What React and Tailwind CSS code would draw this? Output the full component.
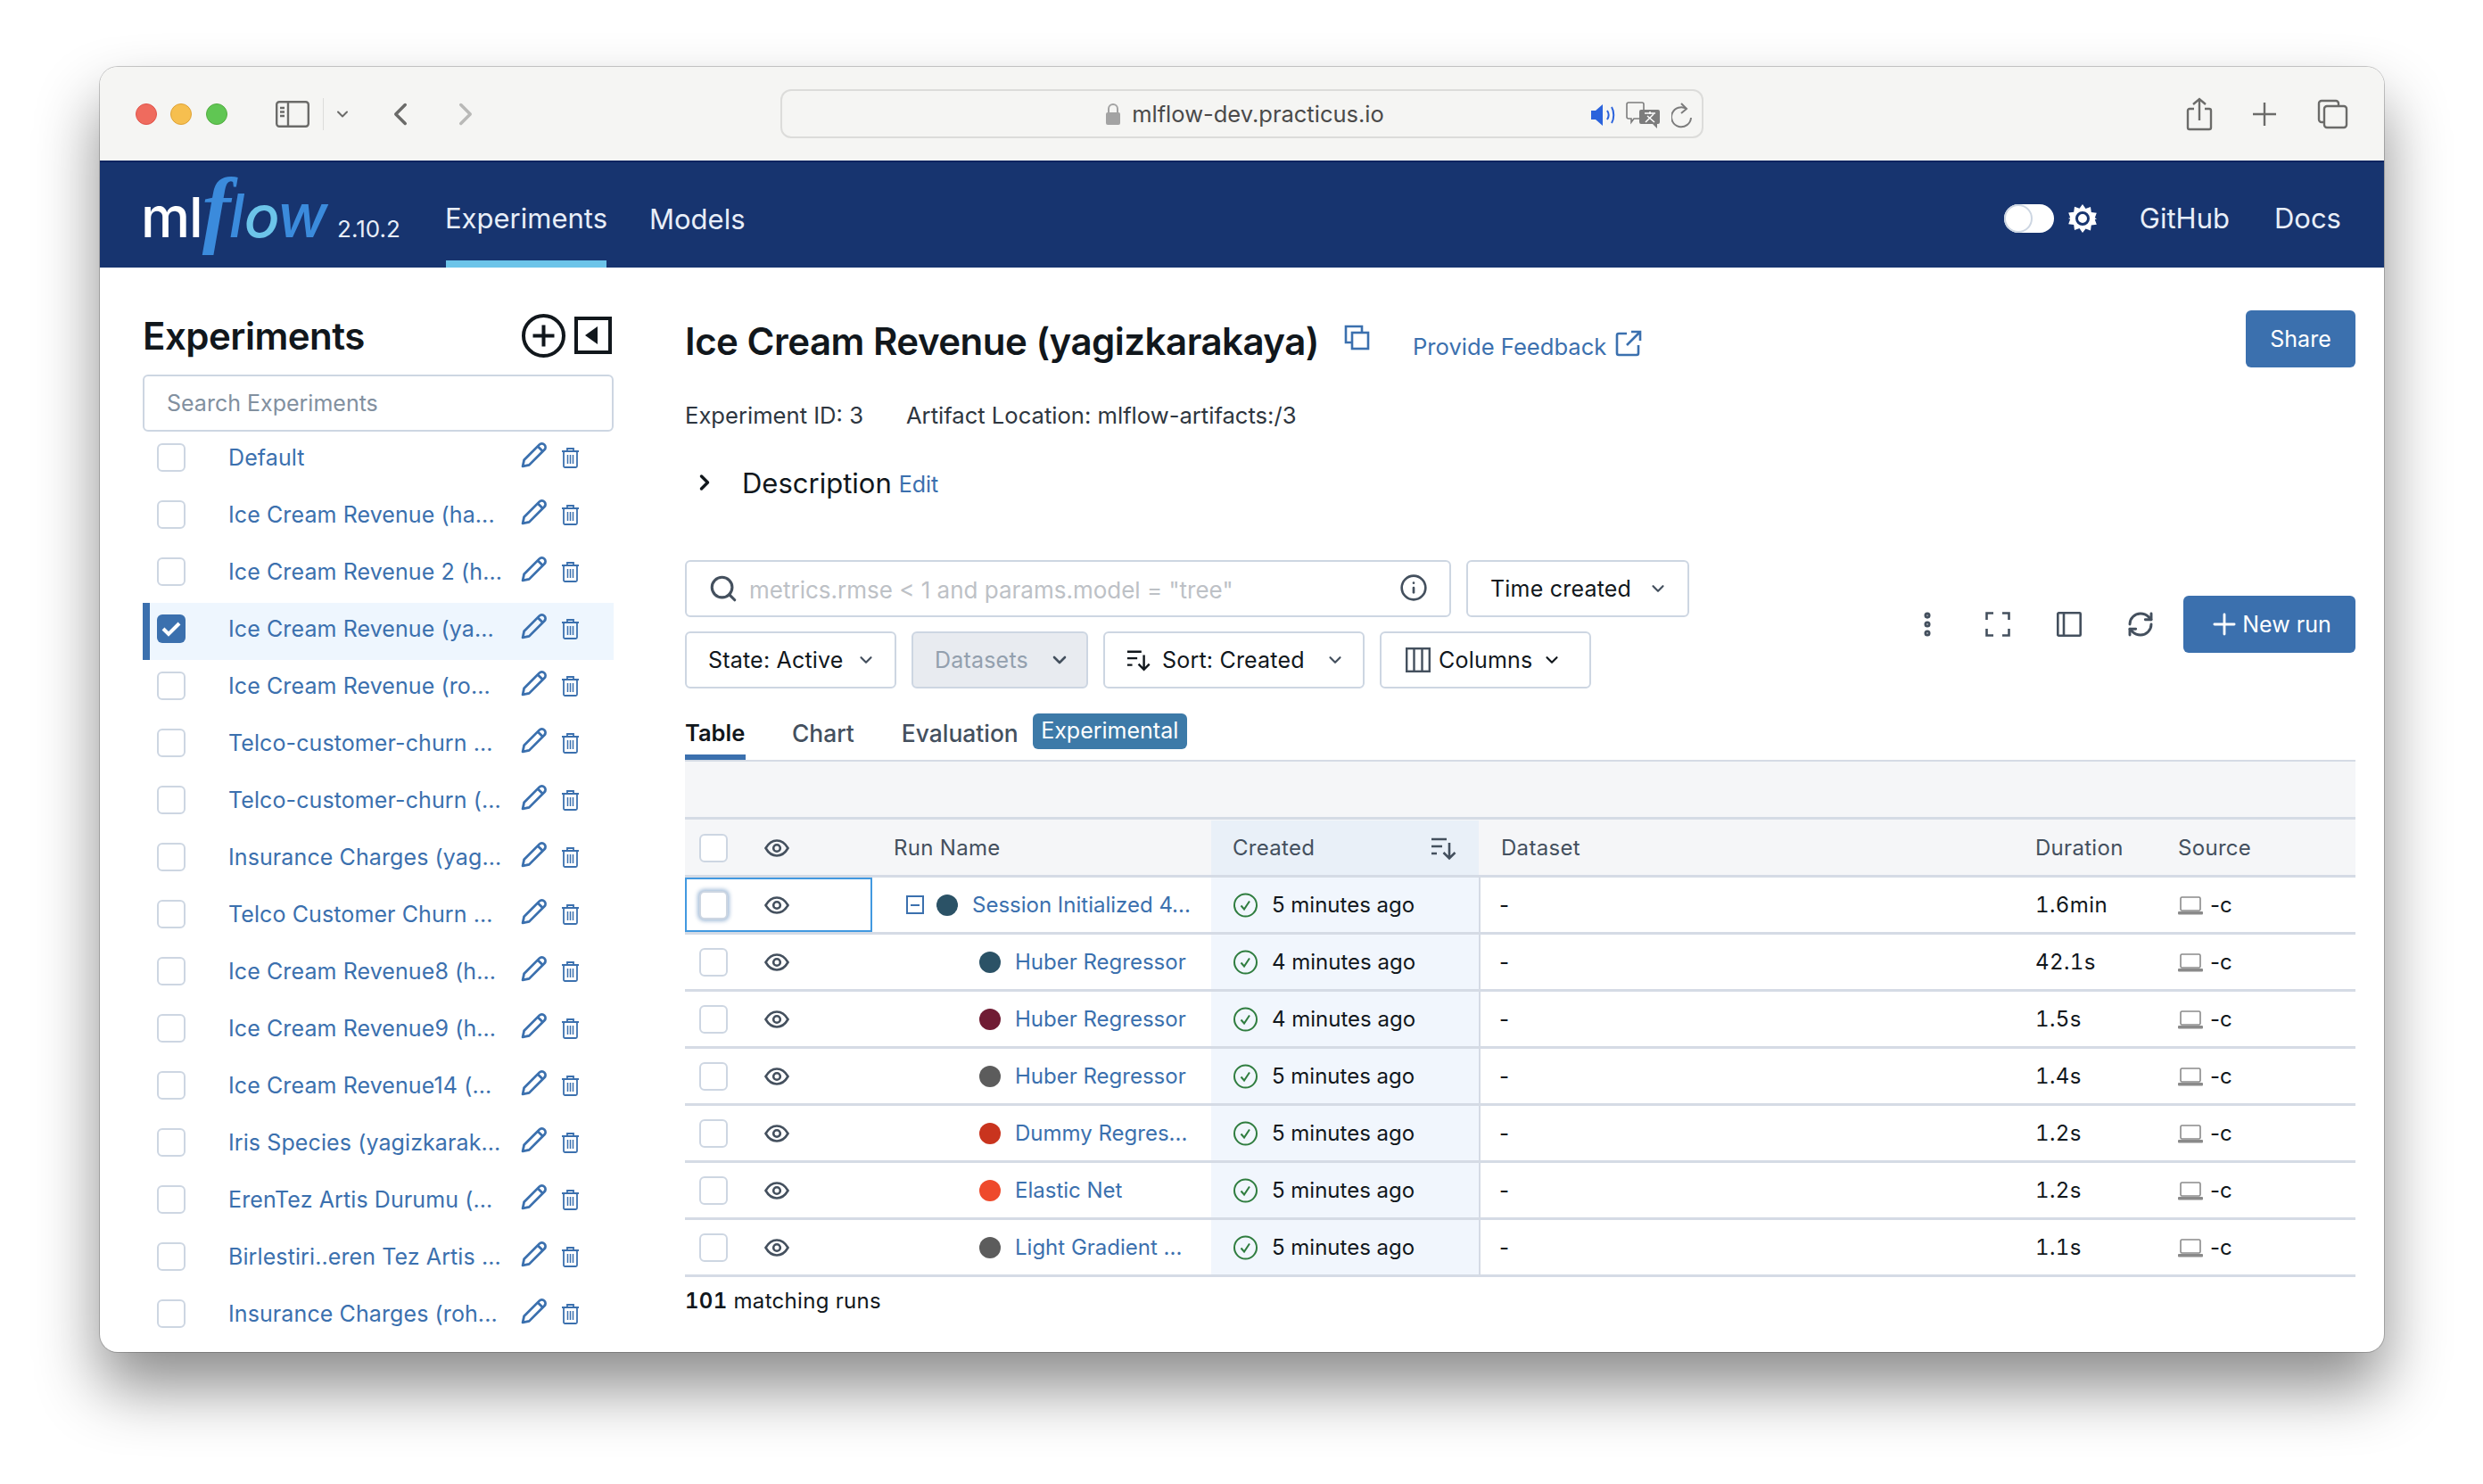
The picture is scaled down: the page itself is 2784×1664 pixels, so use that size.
import { ChevronDown, ChevronLeft, ChevronRight, Plus, Search, Info, EllipsisVertical, RefreshCw } from "lucide-react";

const experiments = [
    "Default",
    "Ice Cream Revenue (ha...",
    "Ice Cream Revenue 2 (h...",
    "Ice Cream Revenue (ya...",
    "Ice Cream Revenue (ro...",
    "Telco-customer-churn ...",
    "Telco-customer-churn (...",
    "Insurance Charges (yag...",
    "Telco Customer Churn ...",
    "Ice Cream Revenue8 (h...",
    "Ice Cream Revenue9 (h...",
    "Ice Cream Revenue14 (...",
    "Iris Species (yagizkarak...",
    "ErenTez Artis Durumu (...",
    "Birlestiri..eren Tez Artis ...",
    "Insurance Charges (roh...",
];

const runs = [
    { name: "Session Initialized 4...", dot: "bg-[#2b5266]", created: "5 minutes ago", duration: "1.6min", parent: true },
    { name: "Huber Regressor", dot: "bg-[#2b5266]", created: "4 minutes ago", duration: "42.1s" },
    { name: "Huber Regressor", dot: "bg-[#701c34]", created: "4 minutes ago", duration: "1.5s" },
    { name: "Huber Regressor", dot: "bg-[#5c5c5c]", created: "5 minutes ago", duration: "1.4s" },
    { name: "Dummy Regres...", dot: "bg-[#c9341e]", created: "5 minutes ago", duration: "1.2s" },
    { name: "Elastic Net", dot: "bg-[#ee4a2c]", created: "5 minutes ago", duration: "1.2s" },
    { name: "Light Gradient ...", dot: "bg-[#5c5c5c]", created: "5 minutes ago", duration: "1.1s" },
];

function PencilIcon() {
    return (
        <svg className="-mt-[6px]" width="30" height="30" viewBox="0 0 29 29" fill="none" stroke="#3b70ae" strokeWidth="2.7" strokeLinejoin="round">
            <path d="M2 27l1.5-7L20 3.5a3.2 3.2 0 0 1 5.5 5.5L9 25.5z" />
            <path d="M18.5 5.5l5 5" />
        </svg>
    );
}

function TrashIcon() {
    return (
        <svg width="21" height="24" viewBox="0 0 21 24" fill="none" stroke="#3b70ae" strokeWidth="1.8">
            <path d="M1 5h19M7 5V2h7v3" />
            <rect x="3" y="5" width="15" height="18" rx="1.5" />
            <path d="M7.5 9v10M10.5 9v10M13.5 9v10" strokeWidth="1.5" />
        </svg>
    );
}

function EyeIcon() {
    return (
        <svg width="28" height="20" viewBox="0 0 28 20" fill="none" stroke="#44505e" strokeWidth="2.6">
            <path d="M1.5 10C5 4 9 1.5 14 1.5S23 4 26.5 10C23 16 19 18.5 14 18.5S5 16 1.5 10z" />
            <circle cx="14" cy="10" r="3.8" />
        </svg>
    );
}

function SortIcon({ color = "#11171c", w = 30 }) {
    return (
        <svg width={w} height="28" viewBox="0 0 30 28" fill="none" stroke={color} strokeWidth="2.6">
            <path d="M1 4h17M1 12h12M1 20h6" />
            <path d="M21 8v17M14.5 19l6.5 6.5 6.5-6.5" />
        </svg>
    );
}

function Check({ checked, header, focused }) {
    if (checked) {
        return (
            <span className="flex h-8 w-8 items-center justify-center rounded-[6px] bg-[#3b70ae]">
                <svg width="22" height="18" viewBox="0 0 22 18" fill="none" stroke="white" strokeWidth="4">
                    <path d="M2 9l6 6L20 3" />
                </svg>
            </span>
        );
    }
    return (
        <span className={`block h-8 w-8 rounded-[6px] border-2 border-[#cdd6e2] bg-white ${focused ? "shadow-[0_0_4px_2px_rgba(59,112,174,0.45)]" : ""} ${header ? "bg-[#f7f8fa]" : ""}`} />
    );
}

function Button({ className = "", children }) {
    return (
        <div className={`flex h-16 items-center rounded-[6px] border-2 border-[#cdd6e2] text-[25px] tracking-[0.2px] text-[#11171c] ${className}`}>
            {children}
        </div>
    );
}

function BrowserBar() {
    return (
        <div className="flex h-[105px] items-center bg-[#f5f5f3] pl-[40px]">
            <span className="h-6 w-6 rounded-full border border-[#e0544b] bg-[#ef6b5e]" />
            <span className="ml-[15px] h-6 w-6 rounded-full border border-[#dfa235] bg-[#f6bf4f]" />
            <span className="ml-[16px] h-6 w-6 rounded-full border border-[#52ac40] bg-[#60c653]" />
            <svg className="ml-[54px]" width="38" height="30" viewBox="0 0 38 30" fill="none" stroke="#6b6b69" strokeWidth="2.4">
                <rect x="1.2" y="1.2" width="35.6" height="27.6" rx="3" />
                <path d="M14 1v28M5 8h5M5 12.5h5M5 17h5" />
            </svg>
            <span className="ml-[15px] h-9 w-px bg-[#dcdcda]" />
            <ChevronDown className="ml-[11px]" size={20} color="#6b6b69" strokeWidth={2.4} />
            <ChevronLeft className="ml-[34px]" size={42} color="#6b6b69" strokeWidth={2} />
            <ChevronRight className="ml-[31px]" size={42} color="#b9b9b7" strokeWidth={2} />
            <div className="relative ml-[332px] flex h-[55px] w-[1035px] items-center justify-center rounded-[12px] border-2 border-[#dcdcda] bg-[#f5f5f3] pl-[6px]">
                <svg className="mr-[12px]" width="18" height="26" viewBox="0 0 18 26" fill="none">
                    <path d="M4 12V7a5 5 0 0 1 10 0v5" stroke="#a3a3a3" strokeWidth="2" />
                    <rect x="1" y="11" width="16" height="14" rx="2" fill="#a3a3a3" />
                </svg>
                <span className="pt-[2px] text-[25.5px] text-[#4a4a4a]">mlflow-dev.practicus.io</span>
                <div className="absolute right-[10px] top-[12px] flex items-center">
                    <svg width="30" height="28" viewBox="0 0 30 28" fill="none">
                        <path d="M1 9h5l8-7v24l-8-7H1z" fill="#2b63dc" />
                        <path d="M19 9c2 3 2 7 0 10M24 5c3 5 3 13 0 18" stroke="#2b63dc" strokeWidth="2" />
                    </svg>
                    <svg className="ml-[10px]" width="38" height="30" viewBox="0 0 38 30" fill="none">
                        <path d="M3 1h15a2 2 0 0 1 2 2v14a2 2 0 0 1-2 2H9l-3 4v-4H3a2 2 0 0 1-2-2V3a2 2 0 0 1 2-2z" stroke="#7c7c7c" strokeWidth="1.6" />
                        <path d="M17 9h19a2 2 0 0 1 2 2v12a2 2 0 0 1-2 2h-1v5l-5-5H17a2 2 0 0 1-2-2V11a2 2 0 0 1 2-2z" fill="#7c7c7c" />
                        <path d="M21 13h12M27 11v3M22 23l9-9M32 23l-8-7" stroke="white" strokeWidth="1.5" />
                    </svg>
                    <svg className="ml-[13px]" width="24" height="30" viewBox="0 0 24 30" fill="none" stroke="#7c7c7c" strokeWidth="2">
                        <path d="M18 7A11 11 0 1 0 23 17" transform="translate(-1 1)" />
                        <path d="M11 2l6 6-6 5" />
                    </svg>
                </div>
            </div>
            <svg className="ml-[541px]" width="30" height="38" viewBox="0 0 30 38" fill="none" stroke="#6b6b69" strokeWidth="2.4">
                <path d="M9 13H4a2 2 0 0 0-2 2v19a2 2 0 0 0 2 2h22a2 2 0 0 0 2-2V15a2 2 0 0 0-2-2h-5" />
                <path d="M15 26V2M8 8l7-6 7 6" />
            </svg>
            <svg className="ml-[44px]" width="28" height="28" viewBox="0 0 28 28" stroke="#6b6b69" strokeWidth="2.4">
                <path d="M14 1v26M1 14h26" />
            </svg>
            <svg className="ml-[45px]" width="35" height="34" viewBox="0 0 35 34" fill="none" stroke="#6b6b69" strokeWidth="2.4">
                <path d="M7 26H5a3 3 0 0 1-3-3V5a3 3 0 0 1 3-3h16a3 3 0 0 1 3 3v2" />
                <rect x="8" y="8" width="25" height="24" rx="3" />
            </svg>
        </div>
    );
}

function NavBar() {
    return (
        <div className="flex h-[120px] items-stretch border-t-2 border-[#0b2460] bg-[#17346f] pl-[48px] pr-[48px] text-[31px] text-[#e8eef8]">
            <div className="flex w-[340px] items-baseline pt-[22px]">
                <span className="ml-[-2px] text-[62px] font-medium leading-[60px] tracking-[-1px] text-white">ml</span>
                <span className="font-['Liberation_Serif',serif] text-[96px] font-bold italic leading-[60px] text-[#3b8bdc]">f</span>
                <span className="ml-[-2px] text-[68px] font-medium italic leading-[60px] text-[#3b8bdc]">l</span>
                <span className="text-[66px] font-medium italic leading-[60px] text-[#6cc4e9]">o</span>
                <span className="ml-[-3px] text-[68px] font-medium italic leading-[60px] text-[#3b8bdc]">w</span>
                <span className="ml-[11px] text-[26px] text-[#e8eef8]">2.10.2</span>
            </div>
            <div className="flex h-full w-[180px] items-center justify-center border-b-8 border-[#6cc4e9] pt-[16px]">Experiments</div>
            <div className="ml-[48px] flex items-center pt-[10px]">Models</div>
            <div className="ml-auto flex items-center pt-[8px]">
                <span className="relative block h-8 w-14 rounded-full bg-white">
                    <span className="absolute left-0 top-0 h-8 w-8 rounded-full border-2 border-[#cdd6e2] bg-white" />
                </span>
                <svg className="ml-[16px]" width="32" height="32" viewBox="0 0 32 32">
                    <path fill="white" d="M16 0l3.5 5 5.5-2 .8 6 6 .8-2 5.5 2.2 1-2.2 1 2 5.5-6 .8-.8 6-5.5-2L16 32l-3.5-5-5.5 2-.8-6-6-.8 2-5.5L0 16l2.2-1-2-5.5 6-.8.8-6 5.5 2z" />
                    <circle cx="16" cy="16" r="6.5" fill="white" stroke="#17346f" strokeWidth="3" />
                </svg>
                <span className="ml-[48px]">GitHub</span>
                <span className="ml-[50px]">Docs</span>
            </div>
        </div>
    );
}

function Sidebar() {
    return (
        <div className="w-[528px] shrink-0 pt-[48px]">
            <div className="flex h-[56px] items-center">
                <span className="pt-[2px] text-[42px] font-semibold leading-none tracking-[-0.5px] text-[#11171c]">Experiments</span>
                <svg className="ml-auto" width="49" height="49" viewBox="0 0 49 49" fill="none" stroke="#11171c" strokeWidth="4">
                    <circle cx="24.5" cy="24.5" r="22.5" />
                    <path d="M24.5 12.5v24M12.5 24.5h24" />
                </svg>
                <svg className="ml-[10px] mr-[2px]" width="42" height="42" viewBox="0 0 42 42">
                    <rect x="2" y="2" width="38" height="38" fill="none" stroke="#11171c" strokeWidth="4" />
                    <path d="M26 11v20L12 21z" fill="#11171c" />
                </svg>
            </div>
            <div className="mt-[16px] flex h-[64px] items-center rounded-[6px] border-2 border-[#cdd6e2] pl-[25px] pt-[2px] text-[25px] text-[#82909f]">
                Search Experiments
            </div>
            {experiments.map((name, i) => (
                <div
                    key={i}
                    className={`flex h-16 items-center border-l-8 pb-[6px] pl-2 ${i === 3 ? "border-[#3b70ae] bg-[#eef6fe]" : "border-transparent"}`}
                >
                    <Check checked={i === 3} />
                    <span className="ml-[48px] w-[328px] pt-[2px] text-[25px] tracking-[0.1px] text-[#3b70ae]">{name}</span>
                    <PencilIcon />
                    <span className="ml-[15px]">
                        <TrashIcon />
                    </span>
                </div>
            ))}
        </div>
    );
}

function RunRow({ run }) {
    return (
        <div className="flex h-16 items-center border-b-[3px] border-[#d5dbe5] text-[24px] text-[#11171c]">
            <div className={`flex h-full w-[210px] items-center pl-4 ${run.parent ? "border-2 border-[#4299e0] pl-[14px]" : ""}`}>
                <Check focused={run.parent} />
                <span className="ml-[41px]"><EyeIcon /></span>
            </div>
            <div className="flex h-full w-[380px] items-center text-[#3b70ae]">
                {run.parent ? (
                    <span className="ml-[38px] mr-[14px] flex h-[21px] w-[20px] items-center justify-center border-2 border-[#3b70ae]">
                        <span className="h-[2px] w-[10px] bg-[#3b70ae]" />
                    </span>
                ) : (
                    <span className="ml-[120px]" />
                )}
                <span className={`h-6 w-6 shrink-0 rounded-full ${run.dot}`} />
                <span className={run.parent ? "ml-4 whitespace-nowrap" : "ml-[16px] whitespace-nowrap"}>{run.name}</span>
            </div>
            <div className="flex h-full w-[300px] items-center bg-[#f1f6fd] pl-[25px]">
                <svg width="27" height="28" viewBox="0 0 27 28" fill="none" stroke="#2f7d3f" strokeWidth="2">
                    <circle cx="13.5" cy="14" r="12.5" />
                    <path d="M8.5 14.5l3.5 4 6-9" />
                </svg>
                <span className="ml-[16px]">{run.created}</span>
            </div>
            <div className="h-full w-[2px] bg-[#d5dbe5]" />
            <div className="w-[598px] pl-[21px]">-</div>
            <div className="w-[184px] pl-[24px] tabular-nums tracking-[0.4px]">{run.duration}</div>
            <div className="flex items-center">
                <svg width="28" height="22" viewBox="0 0 28 22" fill="none">
                    <rect x="3" y="2" width="22" height="15" rx="1.5" stroke="#8a8a8a" strokeWidth="1.6" />
                    <rect x="0" y="18" width="28" height="3.5" rx="1" fill="#8a8a8a" />
                </svg>
                <span className="ml-[8px]">-c</span>
            </div>
        </div>
    );
}

function RunsTable() {
    return (
        <div>
            <div className="h-[65px] border-b-[3px] border-[#d5dbe5] bg-[#f5f6f8]" />
            <div className="flex h-[65px] items-center border-b-[3px] border-[#d5dbe5] bg-[#f5f6f8] pt-[1px] text-[24px] tracking-[0.3px] text-[#44505e]">
                <div className="flex w-[210px] items-center pl-4">
                    <Check header />
                    <span className="ml-[41px]"><EyeIcon /></span>
                </div>
                <div className="w-[380px] pl-[24px]">Run Name</div>
                <div className="flex h-full w-[300px] items-center justify-between bg-[#e9f0f8] pl-[24px] pr-[24px]">
                    Created
                    <SortIcon color="#44505e" />
                </div>
                <div className="w-[2px]" />
                <div className="w-[598px] pl-[23px]">Dataset</div>
                <div className="w-[184px] pl-[24px]">Duration</div>
                <div>Source</div>
            </div>
            {runs.map((run, i) => (
                <RunRow key={i} run={run} />
            ))}
        </div>
    );
}

function MainPanel() {
    return (
        <div className="ml-[80px] w-[1873px] pt-[48px]">
            <div className="flex items-start">
                <h1 className="mt-[8px] text-[42px] font-semibold leading-[54px] tracking-[-0.5px] text-[#11171c]">Ice Cream Revenue (yagizkarakaya)</h1>
                <svg className="ml-[28px] mt-[16px]" width="29" height="29" viewBox="0 0 29 29" fill="none" stroke="#3b70ae" strokeWidth="2.6">
                    <path d="M8 20H2V2h18v6" />
                    <rect x="9" y="9" width="18" height="18" />
                </svg>
                <span className="ml-[48px] mt-[22px] text-[25.6px] text-[#3b70ae]">Provide Feedback</span>
                <svg className="ml-[10px] mt-[22px]" width="30" height="30" viewBox="0 0 30 30" fill="none" stroke="#3b70ae" strokeWidth="2.6">
                    <path d="M13 4H4a2 2 0 0 0-2 2v20a2 2 0 0 0 2 2h20a2 2 0 0 0 2-2v-9" />
                    <path d="M18 2h10v10M28 2L13 17" />
                </svg>
                <div className="ml-auto flex h-16 w-[123px] items-center justify-center rounded-[6px] bg-[#3b70ae] pt-[2px] text-[25px] text-white">Share</div>
            </div>
            <div className="mt-[38px] flex h-8 items-center text-[25.6px] text-[#2e3640]">
                <span>Experiment ID: 3</span>
                <span className="ml-[48px]">Artifact Location: mlflow-artifacts:/3</span>
            </div>
            <div className="mt-[43px] flex h-8 items-center">
                <ChevronRight className="ml-[8px]" size={28} color="#11171c" strokeWidth={3} />
                <span className="ml-[28px] pt-[2px] text-[31px] text-[#11171c]">Description</span>
                <span className="ml-[8px] mt-[5px] text-[25px] text-[#3b70ae]">Edit</span>
            </div>
            <div className="mt-[71px] flex items-center">
                <div>
                    <div className="flex">
                        <div className="flex h-16 w-[859px] items-center rounded-[6px] border-2 border-[#cdd6e2] pl-[24px] pr-[24px] text-[26px] text-[#bdc1c6]">
                            <Search size={34} color="#44505e" strokeWidth={2.2} />
                            <span className="ml-[12px] pt-[2px]">metrics.rmse &lt; 1 and params.model = "tree"</span>
                            <Info className="ml-auto -mt-[2px]" size={32} color="#44505e" strokeWidth={2} />
                        </div>
                        <Button className="ml-[17px] w-[250px] pl-[25px]">
                            <span className="pt-[2px]">Time created</span>
                            <ChevronDown className="ml-[19px]" size={22} color="#44505e" strokeWidth={2.4} />
                        </Button>
                    </div>
                    <div className="mt-[16px] flex">
                        <Button className="w-[237px] pl-[24px]">
                            <span className="pt-[2px]">State: Active</span>
                            <ChevronDown className="ml-[14px]" size={22} color="#44505e" strokeWidth={2.4} />
                        </Button>
                        <Button className="ml-[17px] w-[198px] bg-[#e8ebf0] pl-[24px] !text-[#93a0ae]">
                            <span className="pt-[2px]">Datasets</span>
                            <ChevronDown className="ml-[23px]" size={24} color="#44505e" strokeWidth={2.6} />
                        </Button>
                        <Button className="ml-[17px] w-[293px] pl-[24px]">
                            <SortIcon w={28} />
                            <span className="ml-[12px] pt-[2px]">Sort: Created</span>
                            <ChevronDown className="ml-[23px]" size={22} color="#44505e" strokeWidth={2.4} />
                        </Button>
                        <Button className="ml-[17px] w-[237px] pl-[27px]">
                            <svg width="28" height="28" viewBox="0 0 28 28" fill="none" stroke="#44505e" strokeWidth="2.4">
                                <rect x="1.2" y="1.2" width="25.6" height="25.6" />
                                <path d="M9.5 1v26M18.5 1v26" />
                            </svg>
                            <span className="ml-[9px] pt-[2px]">Columns</span>
                            <ChevronDown className="ml-[11px]" size={22} color="#11171c" strokeWidth={2.4} />
                        </Button>
                    </div>
                </div>
                <div className="ml-auto flex items-center">
                    <EllipsisVertical size={34} color="#44505e" strokeWidth={3} />
                    <svg className="ml-[48px]" width="28" height="28" viewBox="0 0 28 28" fill="none" stroke="#44505e" strokeWidth="2.6">
                        <path d="M1.5 9V1.5H9M19 1.5h7.5V9M26.5 19v7.5H19M9 26.5H1.5V19" />
                    </svg>
                    <svg className="ml-[52px]" width="28" height="28" viewBox="0 0 28 28" fill="none" stroke="#44505e" strokeWidth="2.6">
                        <rect x="1.3" y="1.3" width="25.4" height="25.4" rx="1" />
                        <path d="M8 1v26" />
                    </svg>
                    <RefreshCw className="ml-[50px]" size={32} color="#44505e" strokeWidth={2.2} />
                    <div className="ml-[32px] flex h-16 w-[193px] items-center justify-center rounded-[6px] bg-[#3b70ae] text-[25px] text-white">
                        <Plus size={38} strokeWidth={1.8} />
                        <span className="ml-[1px] pt-[2px]">New run</span>
                    </div>
                </div>
            </div>
            <div className="mt-[28px] flex h-[54px] w-full items-stretch border-b-2 border-[#d5dbe5] text-[26.4px] font-medium">
                <div className="w-[68px] border-b-[6px] border-[#3b70ae] pt-[3px] text-[25.5px] font-semibold text-[#11171c]">Table</div>
                <div className="ml-[52px] pt-[3px] text-[#44505e]">Chart</div>
                <div className="ml-[53px] pt-[3px] text-[#44505e]">Evaluation</div>
                <div className="ml-[16px] flex h-[40px] w-[173px] items-center justify-center rounded-[6px] bg-[#3d7aa8] text-[25px] font-normal text-white">Experimental</div>
            </div>
            <RunsTable />
            <div className="mt-[9px] text-[24px] tracking-[0.3px] text-[#11171c]">
                <span className="font-semibold tabular-nums">101</span> matching runs
            </div>
        </div>
    );
}

export default function App() {
    return (
        <div className="h-[1664px] w-[2784px] overflow-hidden bg-white pl-[112px] pt-[75px] font-['Inter',sans-serif]">
            <div className="h-[1441px] w-[2561px] overflow-hidden rounded-[20px] bg-white shadow-[0_0_0_1px_rgba(0,0,0,0.2),0_40px_70px_rgba(0,0,0,0.45)]">
                <BrowserBar />
                <NavBar />
                <div className="flex pl-[48px]">
                    <Sidebar />
                    <MainPanel />
                </div>
            </div>
        </div>
    );
}
